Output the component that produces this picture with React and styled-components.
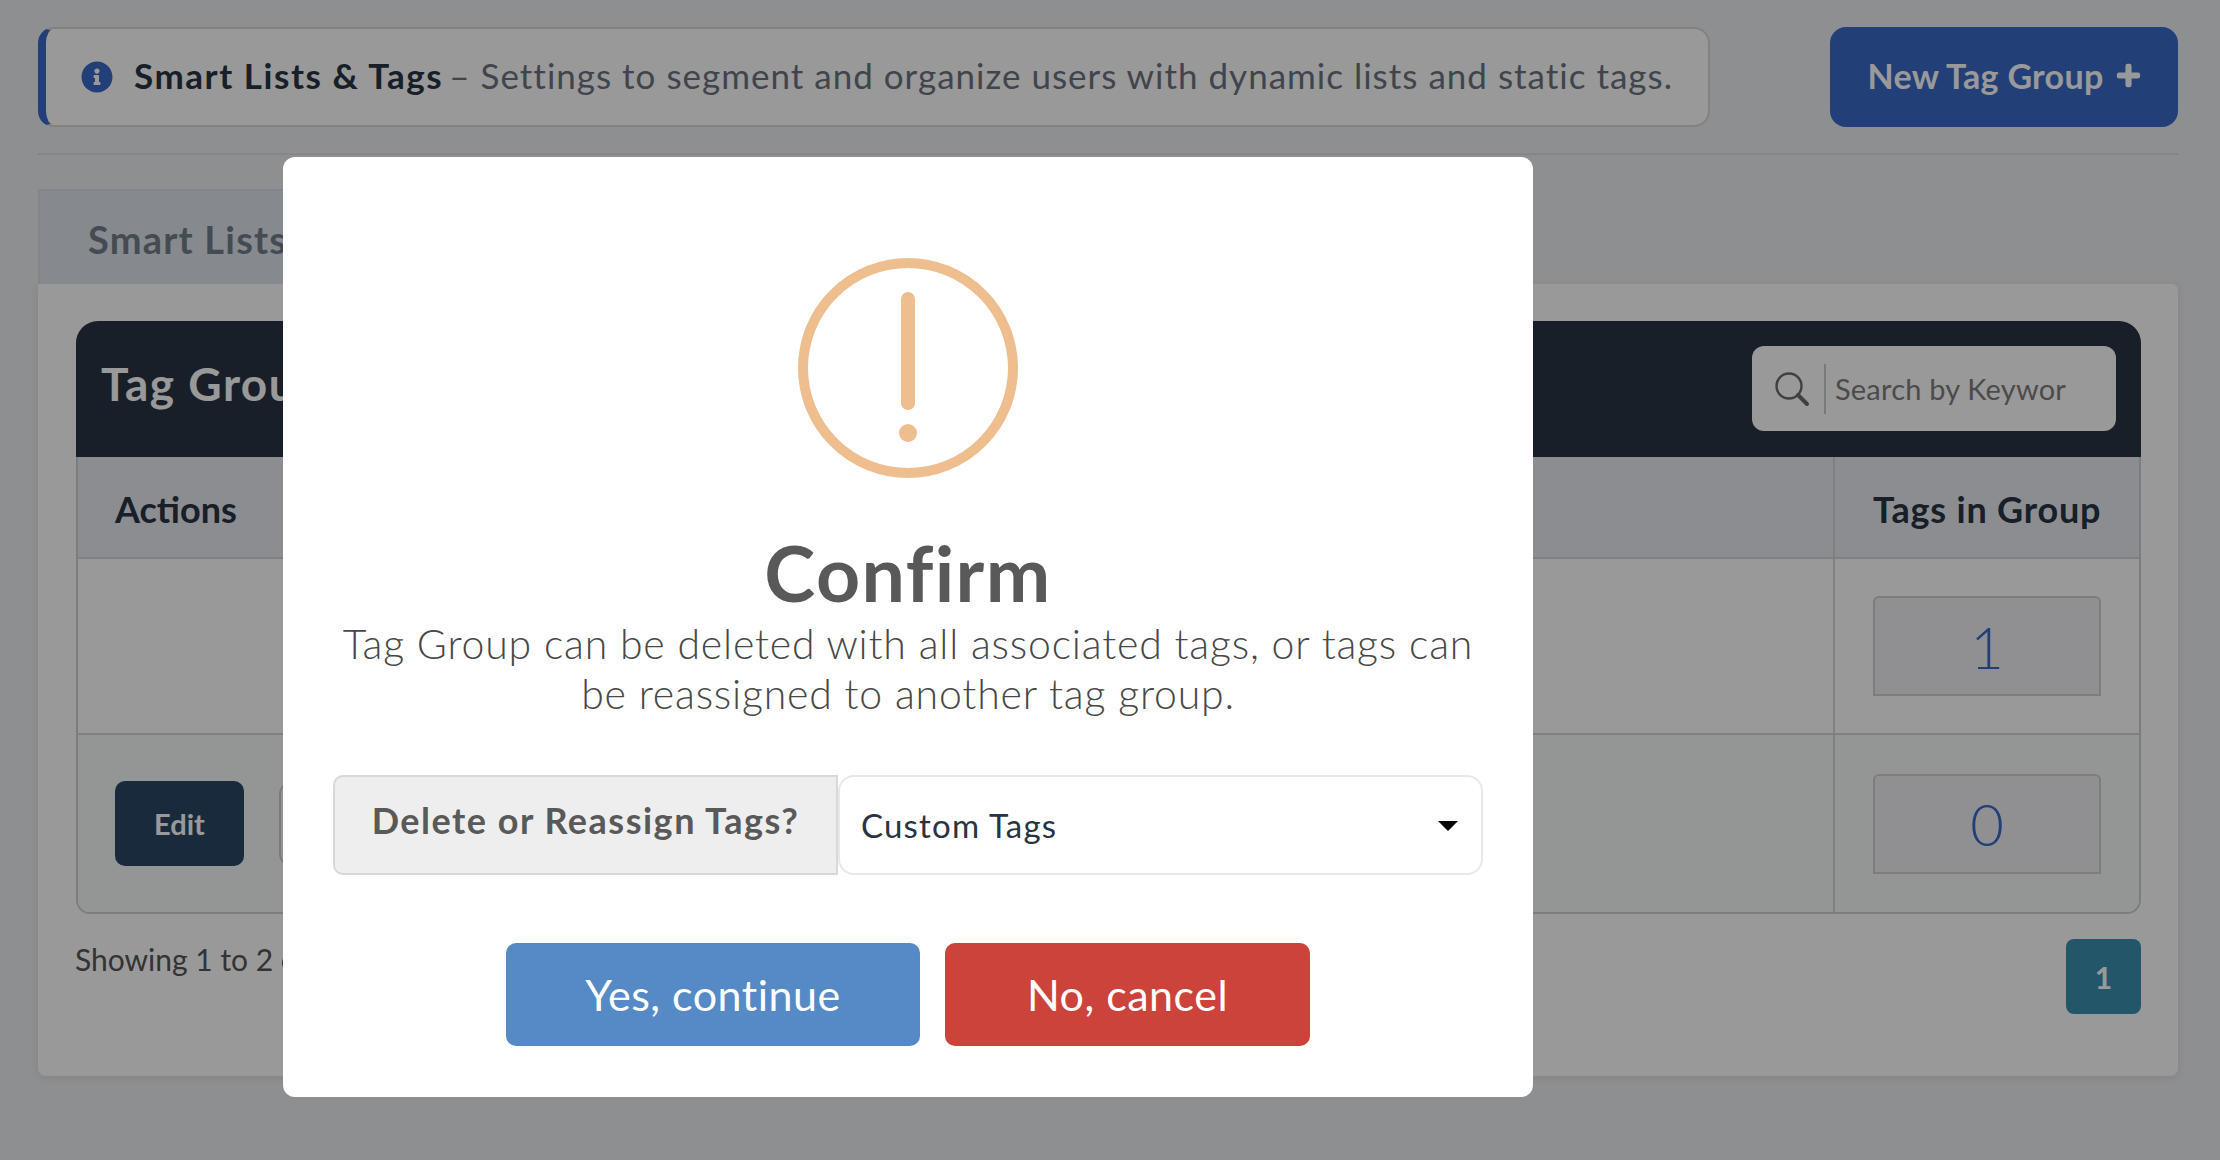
import React from "react";
import styled, { createGlobalStyle } from "styled-components";
import { FaInfoCircle, FaPlus } from "react-icons/fa";

const GlobalStyle = createGlobalStyle`
  html, body {
    margin: 0;
    padding: 0;
    background-color: #edeef2;
    font-family: "Lato", "Open Sans", sans-serif;
  }
  * { box-sizing: border-box; }
`;

const Page = styled.div`
  width: 2220px;
  height: 1160px;
  padding: 27px 42px 0 38px;
  overflow: hidden;
`;

const TopRow = styled.div`
  display: flex;
  justify-content: space-between;
  padding-bottom: 26px;
  border-bottom: 2px solid #dfe0e4;
`;

const Alert = styled.div`
  width: 1672px;
  height: 100px;
  display: flex;
  align-items: center;
  padding: 0 0 5px 35px;
  gap: 21px;
  background-color: #fff;
  border: 2px solid #d8d8d8;
  border-left: 8px solid #3969c8;
  border-radius: 16px;
  font-size: 35px;
  color: #6c7380;
  letter-spacing: 1px;
  svg {
    width: 32px;
    height: 32px;
    color: #3969c8;
    flex: none;
    margin-top: 5px;
  }
  b {
    font-weight: 700;
    color: #283443;
    letter-spacing: 1.55px;
  }
`;

const AlertDetail = styled.span`
  margin-left: -4px;
`;

const NewButton = styled.button`
  width: 348px;
  height: 100px;
  display: flex;
  align-items: center;
  justify-content: center;
  gap: 12px;
  padding-bottom: 5px;
  background-color: #3969c8;
  color: #fff;
  border: none;
  border-radius: 16px;
  font-family: inherit;
  font-weight: 700;
  font-size: 34px;
  letter-spacing: 0.3px;
  svg {
    width: 25px;
    height: 25px;
    stroke: currentColor;
    stroke-width: 30px;
  }
`;

const Tabs = styled.div`
  display: flex;
  margin-top: 34px;
`;

const Tab = styled.div`
  width: 360px;
  height: 95px;
  display: flex;
  align-items: center;
  padding: 2px 0 0 48px;
  background-color: #e0e6ee;
  border: 2px solid #d9dfe6;
  border-bottom: none;
  font-size: 38px;
  font-weight: 700;
  color: #747d8a;
  letter-spacing: 1.2px;
`;

const Card = styled.div`
  height: 792px;
  padding: 37px 37px 0 38px;
  background-color: #fff;
  border-radius: 0 6px 8px 8px;
  box-shadow: 0 2px 8px rgba(0, 0, 0, 0.08);
`;

const PanelHeader = styled.div`
  height: 136px;
  display: flex;
  align-items: center;
  justify-content: space-between;
  padding: 0 25px;
  background-color: #283443;
  border-radius: 22px 22px 0 0;
`;

const PanelTitle = styled.div`
  font-size: 46px;
  font-weight: 700;
  color: #fff;
  margin-top: -11px;
  letter-spacing: 1.5px;
`;

const Search = styled.div`
  width: 364px;
  height: 85px;
  margin: -1px 0 0;
  display: flex;
  align-items: center;
  background-color: #fff;
  border-radius: 12px;
  padding-left: 22px;
  svg {
    width: 36px;
    height: 36px;
    flex: none;
  }
`;

const SearchText = styled.div`
  height: 50px;
  margin-left: 14px;
  padding-left: 9px;
  border-left: 2px solid #ccc;
  display: flex;
  align-items: center;
  font-size: 29px;
  color: #7e7e7e;
  letter-spacing: 0.2px;
`;

const Table = styled.div`
  border: 2px solid #cfd0d3;
  border-top: none;
  border-radius: 0 0 14px 14px;
  overflow: hidden;
`;

const Row = styled.div`
  display: grid;
  grid-template-columns: 1fr 306px;
  height: ${(p) => p.$height}px;
  background-color: ${(p) => p.$bg};
  border-bottom: ${(p) => (p.$last ? "none" : "2px solid #d4d5d7")};
`;

const Cell = styled.div`
  display: flex;
  align-items: center;
  gap: 35px;
  padding-left: 37px;
  & + & {
    border-left: 2px solid #d4d5d7;
    padding-left: 38px;
  }
`;

const HeadLabel = styled.div`
  font-size: 36px;
  font-weight: 700;
  color: #283443;
  letter-spacing: ${(p) => p.$spacing}px;
  margin-top: 3px;
`;

const EditButton = styled.button`
  width: 129px;
  height: 85px;
  background-color: #2b4666;
  color: #fff;
  border: none;
  border-radius: 10px;
  font-family: inherit;
  font-size: 29px;
  font-weight: 700;
`;

const GhostButton = styled.button`
  width: 129px;
  height: 82px;
  background: transparent;
  border: 2px solid #ccc;
  border-radius: 10px;
`;

const CountBox = styled.div`
  width: 228px;
  height: 100px;
  display: flex;
  align-items: center;
  justify-content: center;
  background-color: #f0f1f3;
  border: 2px solid #cfd0d3;
  border-radius: 6px 6px 0 0;
  font-size: 58px;
  font-weight: 300;
  color: #3969c8;
`;

const Footer = styled.div`
  display: flex;
  justify-content: space-between;
  align-items: flex-start;
  padding-top: 25px;
`;

const Showing = styled.div`
  font-size: 30px;
  font-weight: 400;
  color: #555;
  margin: 2px 0 0 -1px;
`;

const PageNumber = styled.div`
  width: 75px;
  height: 75px;
  display: flex;
  align-items: center;
  justify-content: center;
  background-color: #3c8fb1;
  color: #fff;
  border-radius: 8px;
  font-size: 30px;
  font-weight: 700;
`;

const Overlay = styled.div`
  position: fixed;
  inset: 0;
  background-color: rgba(0, 0, 0, 0.4);
`;

const Modal = styled.div`
  position: absolute;
  left: 283px;
  top: 157px;
  width: 1250px;
  height: 940px;
  padding: 100px 50px 0;
  display: flex;
  flex-direction: column;
  align-items: center;
  background-color: #fff;
  border-radius: 12px;
`;

const WarningIcon = styled.svg`
  width: 222px;
  height: 222px;
  display: block;
  flex: none;
`;

const ModalTitle = styled.h2`
  margin: 49px 0 0;
  font-size: 77px;
  line-height: 88px;
  font-weight: 700;
  color: #595959;
  letter-spacing: 1.4px;
`;

const ModalText = styled.p`
  margin: 3px 0 0;
  width: 100%;
  text-align: center;
  font-size: 41px;
  line-height: 50px;
  font-weight: 300;
  color: #484848;
  letter-spacing: 0.8px;
`;

const InputGroup = styled.div`
  width: 100%;
  height: 100px;
  margin-top: 56px;
  display: flex;
  flex: none;
`;

const GroupLabel = styled.div`
  width: 505px;
  display: flex;
  justify-content: center;
  padding-top: 21px;
  background-color: #eee;
  border: 2px solid #d8d8d8;
  border-radius: 10px 0 0 10px;
  font-size: 36px;
  font-weight: 700;
  color: #595959;
  letter-spacing: 1.5px;
`;

const SelectBox = styled.div`
  flex: 1;
  position: relative;
  display: flex;
  align-items: center;
  padding-left: 21px;
  background-color: #fff;
  border: 2px solid #e8e8e8;
  border-radius: 16px;
  font-size: 33px;
  color: #283443;
  letter-spacing: 1.2px;
`;

const Caret = styled.span`
  position: absolute;
  right: 23px;
  top: 44px;
  width: 0;
  height: 0;
  border-left: 10px solid transparent;
  border-right: 10px solid transparent;
  border-top: 10px solid #000;
`;

const ModalActions = styled.div`
  display: flex;
  gap: 25px;
  margin-top: 68px;
`;

const ModalButton = styled.button`
  width: ${(p) => p.$width}px;
  height: 103px;
  background-color: ${(p) => p.$bg};
  color: #fff;
  border: none;
  border-radius: 10px;
  font-family: inherit;
  font-size: 43px;
  font-weight: 400;
  letter-spacing: 0.5px;
`;

export default function App() {
  return (
    <>
      <GlobalStyle />
      <Page>
        <TopRow>
          <Alert>
            <FaInfoCircle />
            <span>
              <b>Smart Lists &amp; Tags</b>{" "}
              <AlertDetail>– Settings to segment and organize users with dynamic lists and static tags.</AlertDetail>
            </span>
          </Alert>
          <NewButton>
            New Tag Group <FaPlus />
          </NewButton>
        </TopRow>

        <Tabs>
          <Tab>Smart Lists</Tab>
        </Tabs>
        <Card>
          <PanelHeader>
            <PanelTitle>Tag Groups</PanelTitle>
            <Search>
              <svg viewBox="0 0 36 36" fill="none" stroke="#6b6b6b">
                <circle cx="15" cy="15" r="12.5" strokeWidth="2.4" />
                <line x1="24" y1="24" x2="33" y2="33" strokeWidth="4" strokeLinecap="round" />
              </svg>
              <SearchText>Search by Keywor</SearchText>
            </Search>
          </PanelHeader>
          <Table>
            <Row $height={102} $bg="#e9ebf1">
              <Cell>
                <HeadLabel $spacing={0}>Actions</HeadLabel>
              </Cell>
              <Cell>
                <HeadLabel $spacing={0.8}>Tags in Group</HeadLabel>
              </Cell>
            </Row>
            <Row $height={176} $bg="#fff">
              <Cell />
              <Cell>
                <CountBox>1</CountBox>
              </Cell>
            </Row>
            <Row $height={177} $bg="#f7faf8" $last>
              <Cell>
                <EditButton>Edit</EditButton>
                <GhostButton />
              </Cell>
              <Cell>
                <CountBox>0</CountBox>
              </Cell>
            </Row>
          </Table>
          <Footer>
            <Showing>Showing 1 to 2 of 2 entries</Showing>
            <PageNumber>1</PageNumber>
          </Footer>
        </Card>
      </Page>

      <Overlay>
        <Modal>
          <WarningIcon viewBox="0 0 222 222" fill="none">
            <circle cx="111" cy="111" r="105" stroke="#efbe8e" strokeWidth="10" />
            <line x1="111" y1="42" x2="111" y2="146" stroke="#efbe8e" strokeWidth="14" strokeLinecap="round" />
            <circle cx="111" cy="176" r="9" fill="#efbe8e" />
          </WarningIcon>
          <ModalTitle>Confirm</ModalTitle>
          <ModalText>
            Tag Group can be deleted with all associated tags, or tags can be reassigned to another tag group.
          </ModalText>
          <InputGroup>
            <GroupLabel>Delete or Reassign Tags?</GroupLabel>
            <SelectBox>
              Custom Tags
              <Caret />
            </SelectBox>
          </InputGroup>
          <ModalActions>
            <ModalButton $width={414} $bg="#558ac6">Yes, continue</ModalButton>
            <ModalButton $width={365} $bg="#cc433c">No, cancel</ModalButton>
          </ModalActions>
        </Modal>
      </Overlay>
    </>
  );
}
